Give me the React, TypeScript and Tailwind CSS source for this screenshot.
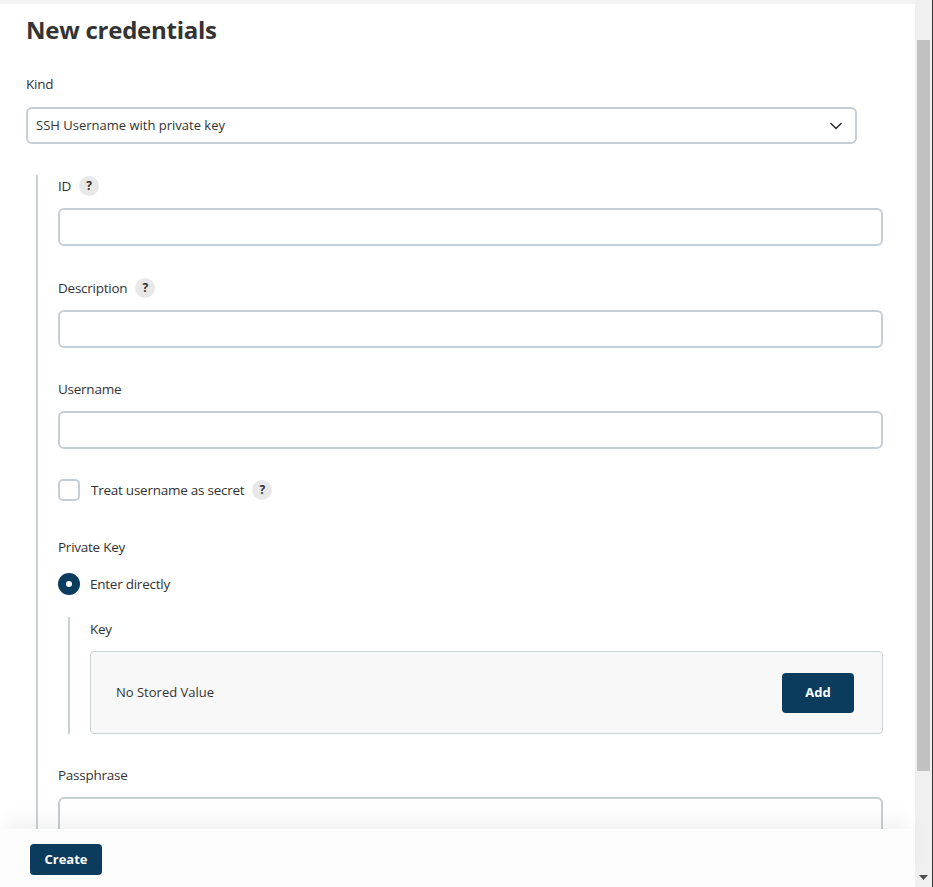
import React from "react";

const font = { fontFamily: '"Open Sans", "Noto Sans", Arial, sans-serif' };

function Help() {
  return (
    <span className="flex h-[20px] w-[20px] items-center justify-center rounded-full bg-[#e8e8e8] text-[12px] font-bold tracking-normal text-[#333]">
      ?
    </span>
  );
}

function Label({ text, help }: { text: string; help?: boolean }) {
  return (
    <div className="flex h-[20px] items-center gap-[8px] text-[13.5px] font-medium tracking-[-0.25px] text-[#333]">
      <span>{text}</span>
      {help && <Help />}
    </div>
  );
}

function Input() {
  return <div className="h-[38px] w-full rounded-[6px] border-2 border-[#c5ced2] bg-white" />;
}

export default function App() {
  return (
    <div className="flex h-[887px] w-[933px] overflow-hidden bg-white" style={font}>
      <div className="flex w-[915px] flex-col">
        <div className="h-[4px] bg-[#f2f2f2]" />
        <div className="flex-1 overflow-hidden pl-[26px] pr-[32px]">
          <h1 className="mt-[10px] h-[32px] text-[24px] font-bold leading-[32px] tracking-[-0.25px] text-[#333]">New credentials</h1>
          <div className="mt-[28px]">
            <Label text="Kind" />
          </div>
          <div className="mt-[13px] flex h-[37px] w-[831px] items-center justify-between rounded-[6px] border-2 border-[#c5ced2] pl-[8px] pr-[12px] text-[13px] text-[#333]">
            <span>SSH Username with private key</span>
            <svg width="14" height="14" viewBox="0 0 14 14" fill="none">
              <path d="M2 4.5l5 5 5-5" stroke="#333" strokeWidth="1.6" strokeLinecap="round" strokeLinejoin="round" />
            </svg>
          </div>

          <div className="ml-[10px] mt-[31px] border-l-2 border-[#c8d1d5] pl-[20px] pt-[1px]">
            <Label text="ID" help />
            <div className="mt-[12px]">
              <Input />
            </div>
            <div className="mt-[32px]">
              <Label text="Description" help />
            </div>
            <div className="mt-[12px]">
              <Input />
            </div>
            <div className="mt-[31px]">
              <Label text="Username" />
            </div>
            <div className="mt-[12px]">
              <Input />
            </div>

            <div className="mt-[30px] flex h-[22px] items-center">
              <span className="h-[22px] w-[22px] rounded-[5px] border-2 border-[#c5ced2] bg-white" />
              <span className="ml-[11px] text-[13.5px] font-medium tracking-[-0.25px] text-[#333]">Treat username as secret</span>
              <span className="ml-[8px]">
                <Help />
              </span>
            </div>

            <div className="mt-[36px]">
              <Label text="Private Key" />
            </div>
            <div className="mt-[16px] flex h-[22px] items-center">
              <span className="flex h-[22px] w-[22px] items-center justify-center rounded-full bg-[#0b3c5d]">
                <span className="h-[6px] w-[6px] rounded-full bg-white" />
              </span>
              <span className="ml-[10px] text-[13.5px] font-medium tracking-[-0.25px] text-[#333]">Enter directly</span>
            </div>

            <div className="ml-[10px] mt-[22px] border-l-2 border-[#c8d1d5] pl-[20px] pt-[2px]">
              <Label text="Key" />
              <div className="mt-[12px] flex h-[83px] items-center justify-between rounded-[4px] border border-[#cdd4d8] bg-[#f8f8f8] pl-[25px] pr-[28px]">
                <span className="text-[13px] text-[#333]">No Stored Value</span>
                <button className="h-[40px] w-[72px] rounded-[4px] bg-[#0b3c5d] text-[13px] font-bold text-white">Add</button>
              </div>
            </div>

            <div className="mt-[31px]">
              <Label text="Passphrase" />
            </div>
            <div className="mt-[12px]">
              <Input />
            </div>
            <div className="h-[100px]" />
          </div>
        </div>
        <div className="relative h-[58px] shrink-0 bg-[#fdfdfd] pl-[30px] pt-[15px] shadow-[0_-14px_22px_-6px_rgba(0,0,0,0.06)]">
          <button className="h-[31px] w-[72px] rounded-[4px] bg-[#0b3c5d] text-[13px] font-bold text-white">Create</button>
        </div>
      </div>
      <div className="flex w-[18px] flex-col border-r border-[#333] bg-[#f0f0f0]">
        <div className="h-[40px]" />
        <div className="mx-[2px] h-[731px] bg-[#c1c1c1]" />
        <div className="flex-1" />
        <div className="flex h-[17px] items-center justify-center pb-[2px]">
          <svg width="9" height="5" viewBox="0 0 9 5">
            <path d="M0 0h9L4.5 5z" fill="#505050" />
          </svg>
        </div>
      </div>
    </div>
  );
}
